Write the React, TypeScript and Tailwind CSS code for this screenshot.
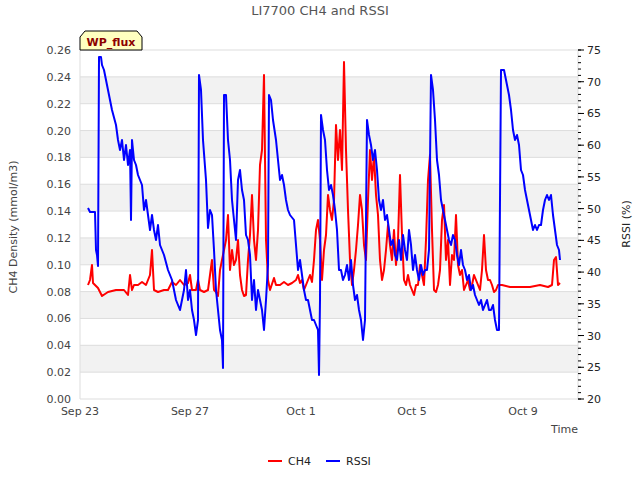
const blue: number[][] = [[88,208],[90,212],[95,212],[96,250],[97,255],[98,266],[99,57],[101,57],[102,65],[104,70],[108,90],[112,110],[116,125],[118,140],[120,150],[122,140],[124,160],[126,145],[128,165],[130,150],[131,220],[132,140],[134,160],[136,165],[138,175],[142,185],[144,210],[146,200],[148,215],[150,230],[152,215],[154,230],[156,240],[158,225],[160,245],[164,255],[168,270],[172,280],[176,300],[180,310],[184,290],[186,270],[188,300],[190,290],[192,310],[194,320],[196,335],[198,320],[199,75],[201,90],[203,140],[206,180],[208,228],[210,210],[212,215],[214,250],[216,290],[218,310],[220,330],[222,340],[223,368],[224,95],[226,95],[228,140],[230,160],[232,200],[234,220],[236,240],[238,180],[240,170],[242,190],[244,200],[246,235],[248,240],[250,255],[252,300],[254,280],[256,310],[258,290],[260,300],[262,310],[264,330],[266,300],[268,265],[269,95],[271,100],[273,120],[276,140],[278,160],[280,180],[282,175],[284,185],[286,200],[288,210],[290,215],[294,220],[296,245],[298,270],[300,260],[302,275],[304,290],[306,300],[308,300],[310,310],[312,320],[314,320],[316,325],[318,330],[319,375],[320,300],[321,115],[323,130],[325,140],[327,170],[329,190],[331,185],[333,195],[335,210],[337,230],[339,270],[341,270],[343,280],[345,275],[347,265],[349,280],[351,260],[353,285],[355,300],[357,295],[359,310],[361,320],[363,340],[365,320],[367,120],[369,135],[371,145],[373,160],[375,150],[377,170],[379,200],[381,210],[383,200],[385,220],[387,215],[389,230],[391,245],[393,240],[395,255],[397,260],[399,240],[401,260],[403,235],[405,250],[407,260],[409,230],[411,245],[413,270],[415,255],[417,270],[419,280],[421,265],[423,275],[425,270],[427,270],[429,250],[431,75],[433,90],[435,120],[437,160],[439,175],[441,200],[443,210],[445,220],[447,230],[449,240],[451,245],[453,235],[455,240],[457,255],[459,265],[461,250],[463,265],[465,270],[467,280],[469,275],[471,290],[473,285],[475,295],[477,300],[479,305],[481,300],[483,310],[485,305],[487,300],[489,310],[491,310],[493,305],[495,320],[497,330],[499,330],[501,70],[504,70],[507,85],[509,95],[511,110],[513,130],[515,140],[517,135],[519,145],[521,170],[523,175],[525,190],[527,200],[529,210],[531,220],[533,230],[535,225],[537,230],[539,225],[541,225],[543,210],[545,200],[547,195],[549,200],[551,195],[553,215],[555,230],[557,245],[559,250],[560,260]];
const red: number[][] = [[88,285],[90,280],[92,265],[93,283],[95,285],[98,288],[102,296],[108,292],[116,290],[124,290],[128,295],[130,275],[132,290],[134,285],[138,285],[142,282],[146,285],[150,275],[152,250],[154,290],[158,292],[164,290],[168,290],[172,282],[176,285],[180,280],[184,285],[188,283],[190,275],[192,290],[196,290],[198,280],[200,290],[204,292],[208,290],[212,260],[214,290],[216,292],[218,296],[220,270],[222,260],[224,250],[226,240],[228,215],[230,270],[232,250],[234,265],[236,260],[238,240],[240,275],[242,290],[244,296],[246,295],[248,260],[250,235],[252,195],[254,240],[256,260],[258,230],[260,165],[262,150],[264,75],[266,240],[268,280],[270,290],[274,278],[276,285],[280,285],[284,282],[288,285],[292,283],[296,280],[298,275],[300,283],[302,280],[304,290],[306,285],[308,280],[310,275],[312,282],[314,260],[316,230],[318,220],[320,240],[322,280],[324,250],[326,235],[328,195],[330,210],[332,220],[334,200],[336,125],[338,160],[340,130],[342,170],[344,62],[346,150],[348,210],[350,260],[352,285],[354,270],[356,250],[358,225],[360,195],[362,210],[364,245],[366,260],[368,200],[370,150],[372,180],[374,155],[376,195],[378,215],[380,260],[382,280],[384,270],[386,250],[388,225],[390,245],[392,260],[394,230],[396,265],[398,240],[400,175],[402,235],[404,280],[406,285],[408,275],[410,285],[412,290],[414,295],[416,285],[418,285],[420,265],[422,275],[424,285],[426,240],[428,180],[430,155],[432,230],[434,290],[436,292],[438,285],[440,270],[442,220],[444,205],[446,260],[448,240],[450,285],[452,255],[454,260],[456,215],[458,265],[460,275],[462,270],[464,290],[466,285],[468,280],[470,290],[472,285],[474,275],[476,280],[478,285],[480,290],[482,270],[484,235],[486,270],[488,280],[490,280],[492,285],[494,292],[496,290],[498,285],[502,285],[510,287],[520,287],[530,287],[540,285],[548,287],[552,285],[554,260],[556,257],[558,285],[560,283]];

const top = 50, bot = 399, L = 80, R = 578;
const yl = (v: number) => bot - (v / 0.26) * (bot - top);
const yr = (v: number) => bot - ((v - 20) / 55) * (bot - top);
const pts = (a: number[][]) => a.map((p) => p.join(",")).join(" ");

export default function App() {
  const left = Array.from({ length: 14 }, (_, i) => i * 0.02);
  const right = Array.from({ length: 12 }, (_, i) => 20 + i * 5);
  const minor = Array.from({ length: 56 }, (_, i) => 20 + i);
  const xs: [number, string][] = [[80, "Sep 23"], [190, "Sep 27"], [301, "Oct 1"], [412, "Oct 5"], [523, "Oct 9"]];
  return (
    <div className="w-[640px] h-[480px] bg-white" style={{ fontFamily: '"DejaVu Sans", sans-serif' }}>
      <svg width="640" height="480" className="block">
        {[0.22, 0.18, 0.14, 0.1, 0.06, 0.02].map((v) => (
          <rect key={v} x={L} y={yl(v + 0.02)} width={R - L} height={yl(v) - yl(v + 0.02)} fill="#f2f2f2" />
        ))}
        {left.map((v) => (
          <line key={v} x1={L} x2={R} y1={yl(v)} y2={yl(v)} stroke="#dddddd" strokeWidth="1" />
        ))}
        <line x1={L} x2={L} y1={top} y2={bot} stroke="#dddddd" />
        <line x1={R} x2={R} y1={top} y2={bot} stroke="#dddddd" />
        {left.map((v) => (
          <text key={v} x={71} y={yl(v) + 4} fontSize="11" fill="#444" textAnchor="end">{v.toFixed(2)}</text>
        ))}
        {minor.map((v) => (
          <line key={v} x1={R} x2={R + 3} y1={yr(v)} y2={yr(v)} stroke="#000" />
        ))}
        {right.map((v) => (
          <g key={v}>
            <line x1={R} x2={R + 6} y1={yr(v)} y2={yr(v)} stroke="#000" />
            <text x={587} y={yr(v) + 4} fontSize="11" fill="#222">{v}</text>
          </g>
        ))}
        {xs.map(([x, t]) => (
          <text key={t} x={x} y={415} fontSize="11" fill="#444" textAnchor="middle">{t}</text>
        ))}
        <text x={578} y={433} fontSize="11" fill="#444" textAnchor="end">Time</text>
        <text x={320} y={15} fontSize="13" fill="#555" textAnchor="middle">LI7700 CH4 and RSSI</text>
        <text transform="translate(17,227) rotate(-90)" fontSize="11" fill="#444" textAnchor="middle">CH4 Density (mmol/m3)</text>
        <text transform="translate(630,224) rotate(-90)" fontSize="11" fill="#222" textAnchor="middle">RSSI (%)</text>
        <polyline points={pts(red)} fill="none" stroke="#ff0000" strokeWidth="2" strokeLinejoin="round" />
        <polyline points={pts(blue)} fill="none" stroke="#0000ff" strokeWidth="2" strokeLinejoin="round" />
        <polygon points="80,50 80,37 85,31 137,31 142,37 142,50" fill="#ffffc0" stroke="#000" strokeWidth="1" />
        <text x={111} y={46} fontSize="11" fontWeight="bold" fill="#8b0000" textAnchor="middle">WP_flux</text>
        <line x1={268} x2={282} y1={461} y2={461} stroke="#ff0000" strokeWidth="2" />
        <text x={288} y={465} fontSize="11" fill="#222">CH4</text>
        <line x1={326} x2={340} y1={461} y2={461} stroke="#0000ff" strokeWidth="2" />
        <text x={346} y={465} fontSize="11" fill="#222">RSSI</text>
      </svg>
    </div>
  );
}
